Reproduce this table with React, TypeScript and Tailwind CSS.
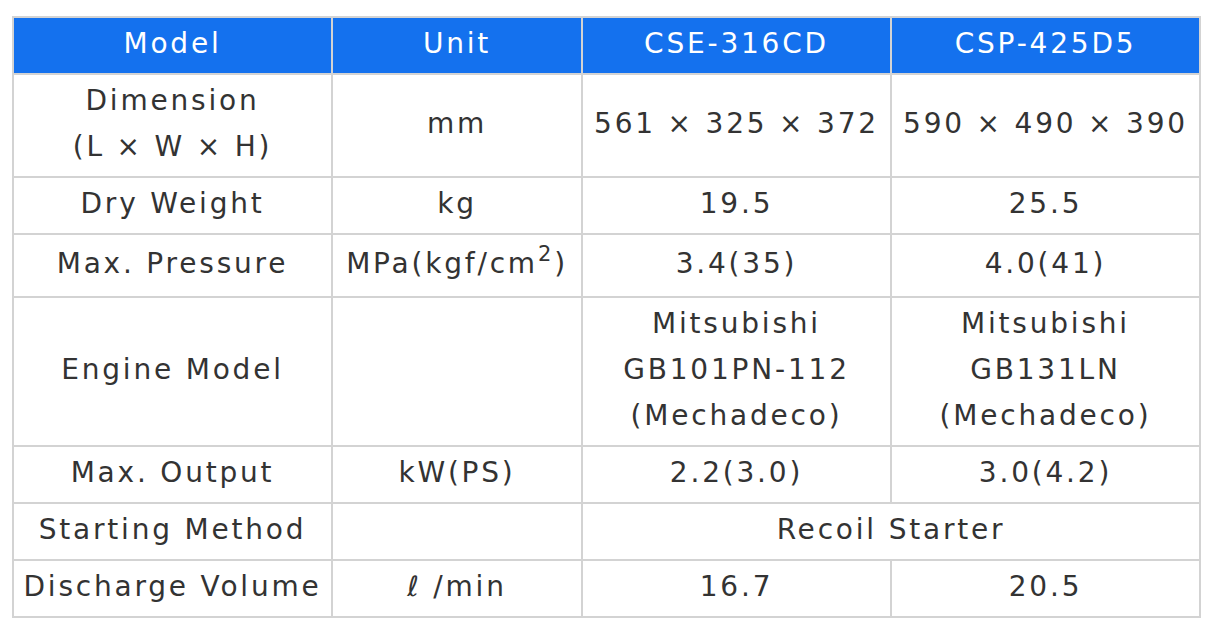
import React from "react";

type Row = {
  label: React.ReactNode;
  unit: React.ReactNode;
  a?: React.ReactNode;
  b?: React.ReactNode;
  span?: React.ReactNode;
  h: string;
};

const rows: Row[] = [
  {
    label: (
      <>
        Dimension
        <br />
        (L × W × H)
      </>
    ),
    unit: "mm",
    a: "561 × 325 × 372",
    b: "590 × 490 × 390",
    h: "h-[101px]",
  },
  { label: "Dry Weight", unit: "kg", a: "19.5", b: "25.5", h: "h-[55px]" },
  {
    label: "Max. Pressure",
    unit: (
      <>
        MPa(kgf/cm<sup className="-top-[12px] text-[21px]">2</sup>)
      </>
    ),
    a: "3.4(35)",
    b: "4.0(41)",
    h: "h-[61px]",
  },
  {
    label: "Engine Model",
    unit: "",
    a: (
      <>
        Mitsubishi
        <br />
        GB101PN-112
        <br />
        (Mechadeco)
      </>
    ),
    b: (
      <>
        Mitsubishi
        <br />
        GB131LN
        <br />
        (Mechadeco)
      </>
    ),
    h: "h-[147px]",
  },
  { label: "Max. Output", unit: "kW(PS)", a: "2.2(3.0)", b: "3.0(4.2)", h: "h-[55px]" },
  { label: "Starting Method", unit: "", span: "Recoil Starter", h: "h-[55px]" },
  { label: "Discharge Volume", unit: "ℓ /min", a: "16.7", b: "20.5", h: "h-[55px]" },
];

function Cell({ children, className = "" }: { children?: React.ReactNode; className?: string }) {
  return (
    <div className={`flex items-center justify-center bg-white pb-[3px] text-center ${className}`}>
      <div>{children}</div>
    </div>
  );
}

export default function App() {
  return (
    <div className="min-h-screen bg-white pl-[12px] pt-[16px]">
      <div
        className="grid w-[1189px] grid-cols-[317px_248px_307px_307px] gap-[2px] bg-[#d3d3d3] p-[2px] text-[28px] leading-[46px] tracking-[0.1em] text-[#333333]"
        style={{ fontFamily: '"DejaVu Sans", Verdana, sans-serif' }}
      >
        {["Model", "Unit", "CSE-316CD", "CSP-425D5"].map((t) => (
          <div key={t} className="flex h-[55px] items-center justify-center bg-[#1471ee] pb-[3px] text-white">
            {t}
          </div>
        ))}
        {rows.map((r, i) => (
          <React.Fragment key={i}>
            <Cell className={r.h}>{r.label}</Cell>
            <Cell className={r.h}>{r.unit}</Cell>
            {r.span ? (
              <Cell className={`${r.h} col-span-2`}>{r.span}</Cell>
            ) : (
              <>
                <Cell className={r.h}>{r.a}</Cell>
                <Cell className={r.h}>{r.b}</Cell>
              </>
            )}
          </React.Fragment>
        ))}
      </div>
    </div>
  );
}
